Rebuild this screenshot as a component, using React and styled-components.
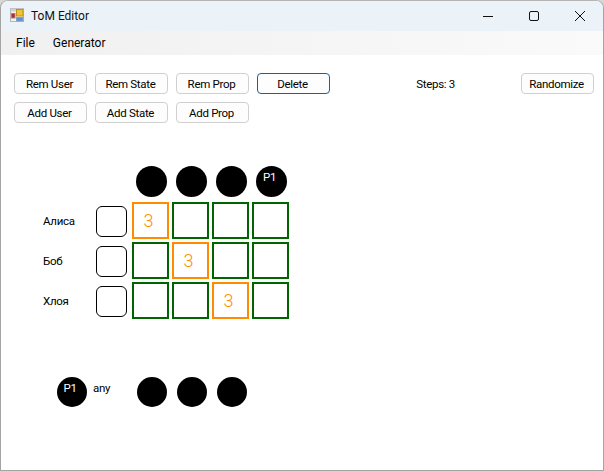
import React from 'react';
import styled, { createGlobalStyle } from 'styled-components';

const GlobalStyle = createGlobalStyle`
html, body {
    margin: 0;
    padding: 0;
    background: #d8d8d8;
}
`

const Frame = styled.div`
width: 604px;
height: 471px;
box-sizing: border-box;
border: 1px solid #a4a4a4;
border-top-color: #b5b5b5;
border-radius: 8px 8px 0 0;
background: #ffffff;
overflow: hidden;
display: flex;
flex-direction: column;
font-family: Roboto, 'Noto Sans', sans-serif;
font-size: 11.5px;
letter-spacing: -0.3px;
color: #000000;
`

const TitleBar = styled.div`
height: 30px;
flex-shrink: 0;
background: #ebf3f9;
display: flex;
align-items: center;
padding-left: 9px;
`

const TitleText = styled.span`
margin-left: 5px;
font-size: 12px;
letter-spacing: 0;
color: #111111;
`

const WindowControls = styled.div`
margin-left: auto;
display: flex;
`

const WindowButton = styled.div`
width: 46px;
height: 30px;
display: flex;
align-items: center;
justify-content: center;
`

const MenuBar = styled.div`
height: 24px;
flex-shrink: 0;
background: linear-gradient(to right, #f0f0f0, #fafafa);
display: flex;
align-items: center;
padding-left: 6px;
`

const MenuItem = styled.span`
padding: 0 9px 1px 9px;
font-size: 12px;
letter-spacing: 0;
`

const Content = styled.div`
flex: 1;
padding: 18px 9px 0 13px;
display: flex;
flex-direction: column;
`

const Toolbar = styled.div`
display: flex;
justify-content: space-between;
`

const ButtonGrid = styled.div`
display: grid;
grid-template-columns: repeat(4, 73px);
grid-auto-rows: 21px;
gap: 8px;
`

const Button = styled.button`
box-sizing: border-box;
width: 73px;
height: 21px;
padding: 0 2px 0 0;
background: #fdfdfd;
border: 1px solid ${props => props.$active ? '#0f62b0' : '#d0d0d0'};
border-radius: 4px;
font: inherit;
letter-spacing: inherit;
color: #000000;
`

const StepsGroup = styled.div`
display: flex;
align-items: flex-start;
`

const StepsLabel = styled.span`
margin-right: 66px;
line-height: 23px;
`

const Board = styled.div`
margin-top: 43px;
display: flex;
flex-direction: column;
gap: 3px;
`

const Row = styled.div`
display: flex;
align-items: center;
height: 37px;
`

const HeaderRow = styled.div`
display: flex;
height: 31px;
margin-bottom: 2px;
padding-left: 122px;
gap: 9px;
`

const UserName = styled.span`
width: 53px;
padding-left: 29px;
box-sizing: content-box;
margin-top: 1px;
`

const UserBox = styled.div`
width: 31px;
height: 31px;
box-sizing: border-box;
border: 1px solid #000000;
border-radius: 6px;
margin-right: 5px;
margin-top: 1px;
`

const CellRow = styled.div`
display: flex;
gap: 3px;
`

const Cell = styled.div`
width: 37px;
height: 37px;
box-sizing: border-box;
border: 2px solid ${props => props.$marked ? '#ff8c00' : '#006400'};
color: #ff8c00;
font-size: 18px;
font-weight: 350;
letter-spacing: 0;
display: flex;
align-items: center;
justify-content: center;
padding-right: 4px;
`

const Circle = styled.div`
width: ${props => props.$size}px;
height: ${props => props.$size}px;
flex-shrink: 0;
border-radius: 50%;
background: #000000;
color: #ffffff;
text-align: center;
line-height: 22px;
padding-right: 4px;
box-sizing: border-box;
`

const Legend = styled.div`
margin-top: 58px;
display: flex;
align-items: flex-start;
padding-left: 43px;
`

const LegendLabel = styled.span`
margin-left: 6px;
width: 44px;
line-height: 22px;
`

const LegendCircles = styled.div`
display: flex;
gap: 10px;
`

const AppIcon = () => (
    <svg width="16" height="16" viewBox="0 0 16 16">
        <rect x="0.5" y="0.5" width="13" height="13" fill="#f4f4ee" stroke="#b4b4b4" />
        <rect x="0.5" y="0.5" width="13" height="3" fill="#d0d0d0" />
        <rect x="6.5" y="1.5" width="6.5" height="6.5" fill="#f4c430" stroke="#c09020" />
        <rect x="1.5" y="5.5" width="3.5" height="4.5" fill="#c82020" stroke="#8a8a8a" />
        <rect x="6.5" y="9.5" width="6.5" height="3.5" fill="#5a90e0" stroke="#8aa0c0" />
    </svg>
)

const Minimize = () => (
    <svg width="12" height="12" viewBox="0 0 12 12">
        <path d="M1 6.5H11" stroke="#111" fill="none" />
    </svg>
)

const Maximize = () => (
    <svg width="12" height="12" viewBox="0 0 12 12">
        <rect x="1.5" y="1.5" width="9" height="9" rx="1.5" stroke="#111" fill="none" />
    </svg>
)

const Close = () => (
    <svg width="12" height="12" viewBox="0 0 12 12">
        <path d="M1 1L11 11M11 1L1 11" stroke="#111" fill="none" />
    </svg>
)

const users = [
    { name: 'Алиса', marked: 0 },
    { name: 'Боб', marked: 1 },
    { name: 'Хлоя', marked: 2 },
]

const columns = [0, 1, 2, 3]

export default function App() {
    return (
        <Frame>
            <GlobalStyle />
            <TitleBar>
                <AppIcon />
                <TitleText>ToM Editor</TitleText>
                <WindowControls>
                    <WindowButton><Minimize /></WindowButton>
                    <WindowButton><Maximize /></WindowButton>
                    <WindowButton><Close /></WindowButton>
                </WindowControls>
            </TitleBar>
            <MenuBar>
                <MenuItem>File</MenuItem>
                <MenuItem>Generator</MenuItem>
            </MenuBar>
            <Content>
                <Toolbar>
                    <ButtonGrid>
                        <Button>Rem User</Button>
                        <Button>Rem State</Button>
                        <Button>Rem Prop</Button>
                        <Button $active>Delete</Button>
                        <Button>Add User</Button>
                        <Button>Add State</Button>
                        <Button>Add Prop</Button>
                    </ButtonGrid>
                    <StepsGroup>
                        <StepsLabel>Steps: 3</StepsLabel>
                        <Button>Randomize</Button>
                    </StepsGroup>
                </Toolbar>
                <Board>
                    <HeaderRow>
                        <Circle $size={31} />
                        <Circle $size={31} />
                        <Circle $size={31} />
                        <Circle $size={31}>P1</Circle>
                    </HeaderRow>
                    {users.map(user => (
                        <Row key={user.name}>
                            <UserName>{user.name}</UserName>
                            <UserBox />
                            <CellRow>
                                {columns.map(col => (
                                    <Cell key={col} $marked={col === user.marked}>
                                        {col === user.marked ? '3' : ''}
                                    </Cell>
                                ))}
                            </CellRow>
                        </Row>
                    ))}
                </Board>
                <Legend>
                    <Circle $size={30}>P1</Circle>
                    <LegendLabel>any</LegendLabel>
                    <LegendCircles>
                        <Circle $size={30} />
                        <Circle $size={30} />
                        <Circle $size={30} />
                    </LegendCircles>
                </Legend>
            </Content>
        </Frame>
    )
}
